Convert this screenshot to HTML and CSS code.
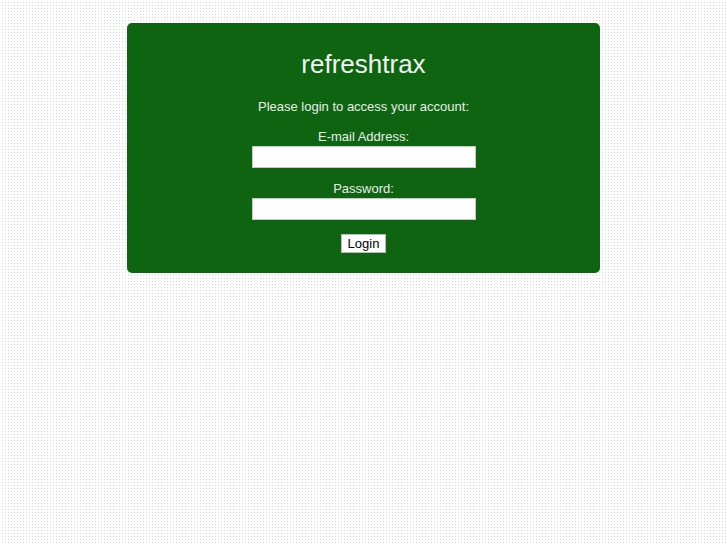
FILE: index.html
```html
<!DOCTYPE html>
<html lang="en">
<head>
    <meta charset="UTF-8">
    <title>refreshtrax</title>
    <link rel="stylesheet" href="styles.css">
</head>
<body>
    <div class="login-box">
        <h1>refreshtrax</h1>
        <p class="intro">Please login to access your account:</p>
        <form class="login-form" onsubmit="return false;">
            <label for="email">E-mail Address:</label>
            <input type="text" id="email">
            <label for="password">Password:</label>
            <input type="password" id="password">
            <button type="submit">Login</button>
        </form>
    </div>
</body>
</html>
```

FILE: styles.css
```css
html {
    background-color: #fff;
    background-image:
        linear-gradient(to bottom, #fff 2px, transparent 2px),
        linear-gradient(to right, #fff 2px, #d6d6d6 2px);
    background-size: 3px 3px;
    min-height: 100%;
}
body {
    margin: 0;
    padding-top: 23px;
    font-family: "Liberation Sans", Arial, sans-serif;
    font-size: 13px;
    color: #e8eee8;
}
.login-box {
    width: 473px;
    margin: 0 auto;
    padding: 26px 0 20px;
    box-sizing: border-box;
    background: #0f6412;
    border-radius: 5px;
    text-align: center;
}
h1 {
    margin: 0;
    font-size: 26px;
    font-weight: normal;
    line-height: 30px;
    color: #f0f5f0;
}
.intro {
    margin: 20px 0 0;
    line-height: 16px;
}
.login-form {
    display: flex;
    flex-direction: column;
    align-items: center;
    margin-top: 14px;
}
label {
    display: block;
    line-height: 16px;
    margin-bottom: 1px;
}
input {
    width: 224px;
    height: 22px;
    box-sizing: border-box;
    border: 1px solid #c8c8c8;
    background: #fff;
    margin: 0 0 13px;
    padding: 1px 3px;
}
button {
    margin-top: 1px;
    height: 19px;
    padding: 0 6px;
    font-family: "Liberation Sans", Arial, sans-serif;
    font-size: 13px;
    color: #000;
    background: #fff;
    border: 1px solid #bbb;
    border-radius: 0;
}
```
